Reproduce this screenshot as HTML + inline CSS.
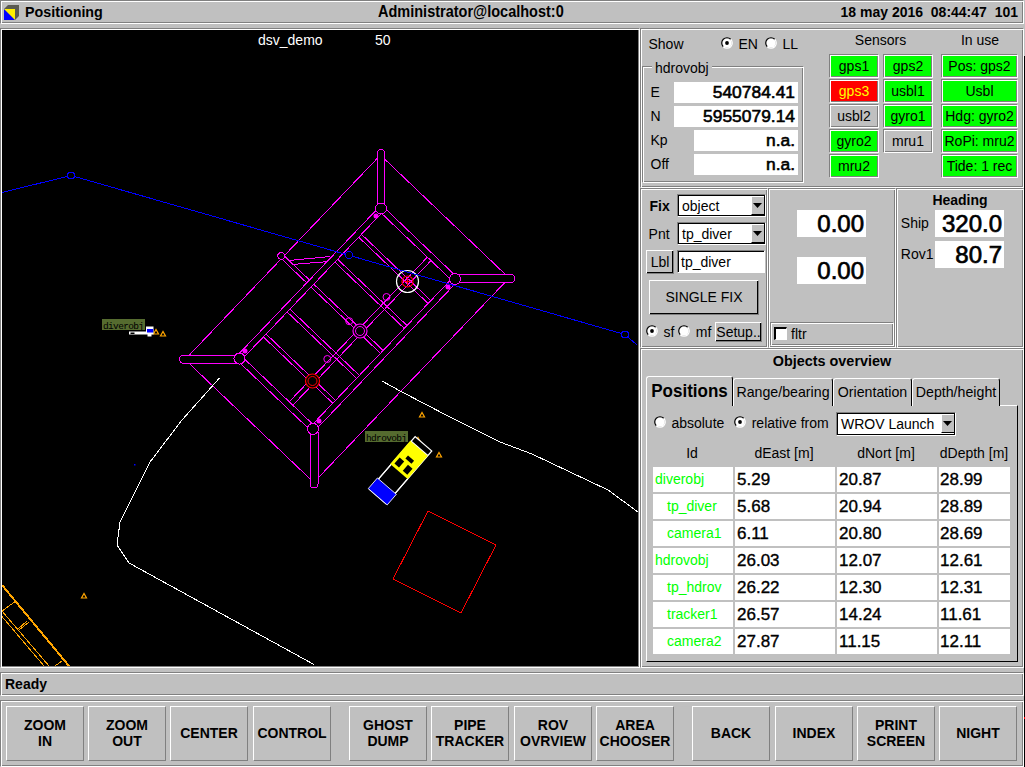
<!DOCTYPE html><html><head><meta charset="utf-8"><style>*{margin:0;padding:0}
html,body{width:1025px;height:767px;overflow:hidden;background:#c0c0c0;font-family:"Liberation Sans",sans-serif;}
.et{position:absolute;box-sizing:border-box;border:1px solid;border-color:#808080 #fff #fff #808080;box-shadow:inset 1px 1px 0 #fff,inset -1px -1px 0 #808080;}
.rz{position:absolute;box-sizing:border-box;border:1px solid;border-color:#fff #808080 #808080 #fff;background:#c0c0c0;}
.sunk{position:absolute;box-sizing:border-box;border:1px solid;border-color:#808080 #fff #fff #808080;box-shadow:inset 1px 1px 0 #000;background:#fff;}
</style></head><body>
<div class="et" style="left:0px;top:0px;width:1024px;height:24px;"></div>
<svg style="position:absolute;left:3px;top:4px" width="17" height="17" viewBox="0 0 17 17"><polygon points="1,5 5,1 16,1 16,12 12,16 12,5" fill="#5a5a50"/><polygon points="1,5 12,5 12,16 1,16" fill="#ffee00"/><polygon points="1,5 12,16 1,16" fill="#0000ff"/></svg>
<div style="position:absolute;top:4.90px;font-size:14.3px;line-height:14.3px;font-weight:bold;color:#000;white-space:pre;left:25px;transform:scaleY(1.08);transform-origin:0 12.10px;">Positioning</div>
<div style="position:absolute;top:4.73px;font-size:14.5px;line-height:14.5px;font-weight:bold;color:#000;white-space:pre;left:378px;transform:scaleY(1.08);transform-origin:0 12.27px;">Administrator@localhost:0</div>
<div style="position:absolute;top:5.15px;font-size:14px;line-height:14px;font-weight:bold;color:#000;white-space:pre;right:7px;transform:scaleY(1.08);transform-origin:0 11.85px;">18 may 2016  08:44:47  101</div>
<div class="et" style="left:0px;top:28px;width:640px;height:640px;"></div>
<svg style="position:absolute;left:2px;top:30px" width="636" height="636" viewBox="2 30 636 636"><rect x="2" y="30" width="636" height="636" fill="#000"/><g transform="translate(347.1,318.75) rotate(43.7)" fill="none" stroke="#ff00ff" stroke-width="1" shape-rendering="crispEdges">
<rect x="-89" y="-141.4" width="178" height="282.8"/>
<line x1="-55" y1="-106" x2="55" y2="-106"/>
<line x1="-55" y1="100" x2="55" y2="100"/>
<line x1="-54" y1="-107" x2="-54" y2="107"/>
<line x1="48" y1="-107" x2="48" y2="107"/>
<line x1="-55" y1="-100" x2="55" y2="-100"/>
<line x1="-55" y1="106" x2="55" y2="106"/>
<line x1="-48" y1="-107" x2="-48" y2="107"/>
<line x1="54" y1="-107" x2="54" y2="107"/>
<line x1="15.5" y1="-100" x2="15.5" y2="100"/>
<line x1="20.5" y1="-100" x2="20.5" y2="100"/>
<line x1="-48" y1="-71" x2="48" y2="-71"/>
<line x1="-48" y1="-67" x2="48" y2="-67"/>
<line x1="-48" y1="-36.5" x2="48" y2="-36.5"/>
<line x1="-48" y1="-32.5" x2="48" y2="-32.5"/>
<line x1="-48" y1="-2" x2="48" y2="-2"/>
<line x1="-48" y1="2" x2="48" y2="2"/>
<line x1="-48" y1="32.5" x2="48" y2="32.5"/>
<line x1="-48" y1="36.5" x2="48" y2="36.5"/>
<line x1="-48" y1="67" x2="48" y2="67"/>
<line x1="-48" y1="71" x2="48" y2="71"/>
<line x1="-88" y1="-2" x2="-54" y2="-2"/>
<line x1="-88" y1="2" x2="-54" y2="2"/>
<circle cx="-91" cy="0" r="3.5" fill="#000"/>
</g>
<g stroke="#ff00ff" shape-rendering="crispEdges"><line x1="290" y1="260.4" x2="330.4" y2="256.5"/><line x1="293.9" y1="264.3" x2="326.5" y2="261.7"/><line x1="364" y1="332" x2="381" y2="349"/></g>
<g fill="#000" stroke="#ff00ff" stroke-width="1" shape-rendering="crispEdges">
<rect x="377" y="149.5" width="7.5" height="60" rx="3.7"/>
<rect x="455" y="274.5" width="60" height="8" rx="4"/>
<rect x="179.5" y="355" width="60" height="8.5" rx="4.2"/>
<rect x="310" y="428" width="8" height="60" rx="4"/>
<circle cx="381" cy="208.5" r="5.5"/>
<circle cx="455" cy="279" r="5.5"/>
<circle cx="239.5" cy="358.5" r="5.5"/>
<circle cx="313" cy="428.8" r="5.5"/>
</g>
<circle cx="407.5" cy="281.5" r="11" fill="none" stroke="#fff" stroke-width="1.2"/>
<circle cx="407.5" cy="281.5" r="5.5" fill="none" stroke="#ff0000" stroke-width="1.2"/>
<path d="M404 281.5h7M407.5 278v7" stroke="#ff0000" stroke-width="1.2"/>
<circle cx="360" cy="331" r="7" fill="#000" stroke="#ff00ff" stroke-width="1.2"/>
<circle cx="360" cy="331" r="4.5" fill="none" stroke="#ff00ff" stroke-width="1"/>
<circle cx="312.5" cy="381" r="7" fill="#000" stroke="#ff0000" stroke-width="1.2"/>
<circle cx="312.5" cy="381" r="4.5" fill="none" stroke="#ff0000" stroke-width="1"/>
<circle cx="386.5" cy="297" r="3.5" fill="none" stroke="#ff00ff"/>
<circle cx="327.3" cy="359" r="3.5" fill="none" stroke="#ff00ff"/>
<circle cx="349.2" cy="321.2" r="3.5" fill="none" stroke="#ff00ff"/>
<circle cx="376" cy="216" r="2.5" fill="#ff00ff"/>
<circle cx="448" cy="287" r="2.5" fill="#ff00ff"/>
<circle cx="245" cy="351" r="2.5" fill="#ff00ff"/>
<circle cx="319" cy="421" r="2.5" fill="#ff00ff"/>
<g shape-rendering="crispEdges" fill="none" stroke-width="1">
<polyline points="2,192.5 71,175.5 625,334.5 637,345" stroke="#0000ff"/>
<circle cx="71" cy="175.5" r="3.5" stroke="#0000ff" fill="#000"/>
<circle cx="349" cy="255" r="3.5" stroke="#0000ff" fill="#000"/>
<circle cx="625" cy="334.5" r="3.5" stroke="#0000ff" fill="#000"/>
</g>
<g fill="none" stroke="#fff" stroke-width="1" shape-rendering="crispEdges">
<polyline points="219.5,378 182,420 150,462 120,522 117,545 129,563 314,664.5"/>
<polyline points="382,381 402,392 448,416 500,442 532,454 608,490 638,512"/>
</g>
<polygon points="428,511 496,545 461,613 393,579" fill="none" stroke="#ff0000" shape-rendering="crispEdges"/>
<g stroke="#ffa500" fill="none" shape-rendering="crispEdges">
<line x1="2" y1="585" x2="69" y2="666" stroke-width="2"/><line x1="2" y1="611" x2="49" y2="666"/><line x1="2" y1="616.5" x2="44" y2="666"/>
<line x1="2" y1="611" x2="14.5" y2="602"/><line x1="18" y1="629" x2="27" y2="621"/><line x1="19" y1="630" x2="29" y2="622"/><line x1="55" y1="666" x2="62.5" y2="660.5"/>
</g>
<polygon points="81.5,598 86.5,598 84,593.5" fill="none" stroke="#ffa500" stroke-width="1.2"/>
<polygon points="419.5,417 424.5,417 422,412.5" fill="none" stroke="#ffa500" stroke-width="1.2"/>
<polygon points="436.5,457 441.5,457 439,452.5" fill="none" stroke="#ffa500" stroke-width="1.2"/>
<polygon points="153.5,334 158.5,334 156,329.5" fill="none" stroke="#ffa500" stroke-width="1.2"/>
<polygon points="160.5,336 165.5,336 163,331.5" fill="none" stroke="#ffa500" stroke-width="1.2"/>
<polygon points="415.5,442 420.5,442 418,437.5" fill="none" stroke="#ffa500" stroke-width="1.2"/>
<g transform="translate(400.6,470.25) rotate(-49.2)">
<rect x="-35" y="-11" width="70" height="22" fill="#000" stroke="#fff" stroke-width="1.2"/>
<rect x="-35" y="-12.5" width="14" height="25" fill="#0000ff" stroke="#fff" stroke-width="0.8"/>
<rect x="-2" y="-12" width="31" height="23" fill="#ffff00"/>
<rect x="1" y="-9" width="8" height="6" fill="#000"/><rect x="1" y="2" width="8" height="6" fill="#000"/><rect x="12" y="-4" width="4" height="8" fill="#000"/>
<line x1="29" y1="-11" x2="29" y2="11" stroke="#fff"/><line x1="-21" y1="-11" x2="-2" y2="-11" stroke="#fff"/><line x1="-21" y1="11" x2="-2" y2="11" stroke="#fff"/>
</g>
<rect x="365" y="431" width="43" height="11" fill="#556b2f"/>
<text x="366" y="440.5" font-family="Liberation Mono" font-size="9.5" fill="#000" textLength="41">hdrovobj</text>
<rect x="102" y="319" width="43" height="11" fill="#556b2f"/>
<text x="103" y="328.5" font-family="Liberation Mono" font-size="9.5" fill="#000" textLength="41">diverobj</text>
<path d="M129,331.5h17v-5h7.5v8h-2v2h-4v-2h-18.5z" fill="#fff"/><rect x="130.5" y="332.5" width="4" height="1.5" fill="#000"/><rect x="147" y="329" width="6" height="3.5" fill="#0000ff"/><rect x="134" y="464" width="1.5" height="1.5" fill="#0000ff"/>
<text x="258" y="44.8" font-family="Liberation Sans" font-size="14" fill="#fff">dsv_demo</text>
<text x="375" y="44.8" font-family="Liberation Sans" font-size="14" fill="#fff">50</text></svg>
<div class="et" style="left:640px;top:28px;width:384px;height:160px;"></div>
<div style="position:absolute;top:37.15px;font-size:14px;line-height:14px;font-weight:normal;color:#000;white-space:pre;left:648.5px;">Show</div>
<svg style="position:absolute;left:721px;top:37px" width="12" height="12" viewBox="0 0 12 12"><circle cx="6" cy="6" r="4.6" fill="#fff"/><path d="M2.25 9.75 A5.3 5.3 0 0 1 9.75 2.25" stroke="#000" stroke-width="1.1" fill="none"/><path d="M9.75 2.25 A5.3 5.3 0 0 1 2.25 9.75" stroke="#fff" stroke-width="1.1" fill="none"/><circle cx="6" cy="6" r="1.9" fill="#000"/></svg>
<div style="position:absolute;top:37.15px;font-size:14px;line-height:14px;font-weight:normal;color:#000;white-space:pre;left:738.5px;">EN</div>
<svg style="position:absolute;left:765px;top:37px" width="12" height="12" viewBox="0 0 12 12"><circle cx="6" cy="6" r="4.6" fill="#fff"/><path d="M2.25 9.75 A5.3 5.3 0 0 1 9.75 2.25" stroke="#000" stroke-width="1.1" fill="none"/><path d="M9.75 2.25 A5.3 5.3 0 0 1 2.25 9.75" stroke="#fff" stroke-width="1.1" fill="none"/></svg>
<div style="position:absolute;top:37.15px;font-size:14px;line-height:14px;font-weight:normal;color:#000;white-space:pre;left:782.5px;">LL</div>
<div class="et" style="left:642px;top:66px;width:162px;height:117px;"></div>
<div style="position:absolute;left:652px;top:60px;width:60px;height:12px;background:#c0c0c0;"></div>
<div style="position:absolute;top:61.15px;font-size:14px;line-height:14px;font-weight:normal;color:#000;white-space:pre;left:655px;">hdrovobj</div>
<div style="position:absolute;top:85.15px;font-size:14px;line-height:14px;font-weight:normal;color:#000;white-space:pre;left:650.5px;">E</div>
<div style="position:absolute;left:674px;top:82px;width:124px;height:21px;background:#ffffff;"></div>
<div style="position:absolute;top:84.27px;font-size:17.4px;line-height:17.4px;font-weight:normal;color:#000;white-space:pre;right:230px;-webkit-text-stroke:0.6px #000">540784.41</div>
<div style="position:absolute;top:109.15px;font-size:14px;line-height:14px;font-weight:normal;color:#000;white-space:pre;left:650.5px;">N</div>
<div style="position:absolute;left:674px;top:106px;width:124px;height:21px;background:#ffffff;"></div>
<div style="position:absolute;top:108.27px;font-size:17.4px;line-height:17.4px;font-weight:normal;color:#000;white-space:pre;right:230px;-webkit-text-stroke:0.6px #000">5955079.14</div>
<div style="position:absolute;top:133.15px;font-size:14px;line-height:14px;font-weight:normal;color:#000;white-space:pre;left:650.5px;">Kp</div>
<div style="position:absolute;left:694px;top:130px;width:104px;height:21px;background:#ffffff;"></div>
<div style="position:absolute;top:132.27px;font-size:17.4px;line-height:17.4px;font-weight:normal;color:#000;white-space:pre;right:230px;-webkit-text-stroke:0.6px #000">n.a.</div>
<div style="position:absolute;top:157.15px;font-size:14px;line-height:14px;font-weight:normal;color:#000;white-space:pre;left:650.5px;">Off</div>
<div style="position:absolute;left:694px;top:154px;width:104px;height:21px;background:#ffffff;"></div>
<div style="position:absolute;top:156.27px;font-size:17.4px;line-height:17.4px;font-weight:normal;color:#000;white-space:pre;right:230px;-webkit-text-stroke:0.6px #000">n.a.</div>
<div style="position:absolute;top:33.15px;font-size:14px;line-height:14px;font-weight:normal;color:#000;white-space:pre;left:840.50px;width:80px;text-align:center;">Sensors</div>
<div style="position:absolute;top:33.15px;font-size:14px;line-height:14px;font-weight:normal;color:#000;white-space:pre;left:940.00px;width:80px;text-align:center;">In use</div>
<div class="et" style="left:829px;top:54px;width:50px;height:24px;background:#00ff00;"></div>
<div style="position:absolute;top:59.15px;font-size:14px;line-height:14px;font-weight:normal;color:#000;white-space:pre;left:829.00px;width:50px;text-align:center;">gps1</div>
<div class="et" style="left:883px;top:54px;width:50px;height:24px;background:#00ff00;"></div>
<div style="position:absolute;top:59.15px;font-size:14px;line-height:14px;font-weight:normal;color:#000;white-space:pre;left:883.00px;width:50px;text-align:center;">gps2</div>
<div class="et" style="left:941px;top:54px;width:77px;height:24px;background:#00ff00;"></div>
<div style="position:absolute;top:59.15px;font-size:14px;line-height:14px;font-weight:normal;color:#000;white-space:pre;left:941.00px;width:77px;text-align:center;">Pos: gps2</div>
<div class="et" style="left:829px;top:79px;width:50px;height:24px;background:#ff0000;"></div>
<div style="position:absolute;top:84.15px;font-size:14px;line-height:14px;font-weight:normal;color:#ffff00;white-space:pre;left:829.00px;width:50px;text-align:center;">gps3</div>
<div class="et" style="left:883px;top:79px;width:50px;height:24px;background:#00ff00;"></div>
<div style="position:absolute;top:84.15px;font-size:14px;line-height:14px;font-weight:normal;color:#000;white-space:pre;left:883.00px;width:50px;text-align:center;">usbl1</div>
<div class="et" style="left:941px;top:79px;width:77px;height:24px;background:#00ff00;"></div>
<div style="position:absolute;top:84.15px;font-size:14px;line-height:14px;font-weight:normal;color:#000;white-space:pre;left:941.00px;width:77px;text-align:center;">Usbl</div>
<div class="et" style="left:829px;top:104px;width:50px;height:24px;background:#c0c0c0;"></div>
<div style="position:absolute;top:109.15px;font-size:14px;line-height:14px;font-weight:normal;color:#000;white-space:pre;left:829.00px;width:50px;text-align:center;">usbl2</div>
<div class="et" style="left:883px;top:104px;width:50px;height:24px;background:#00ff00;"></div>
<div style="position:absolute;top:109.15px;font-size:14px;line-height:14px;font-weight:normal;color:#000;white-space:pre;left:883.00px;width:50px;text-align:center;">gyro1</div>
<div class="et" style="left:941px;top:104px;width:77px;height:24px;background:#00ff00;"></div>
<div style="position:absolute;top:109.15px;font-size:14px;line-height:14px;font-weight:normal;color:#000;white-space:pre;left:941.00px;width:77px;text-align:center;">Hdg: gyro2</div>
<div class="et" style="left:829px;top:129px;width:50px;height:24px;background:#00ff00;"></div>
<div style="position:absolute;top:134.15px;font-size:14px;line-height:14px;font-weight:normal;color:#000;white-space:pre;left:829.00px;width:50px;text-align:center;">gyro2</div>
<div class="et" style="left:883px;top:129px;width:50px;height:24px;background:#c0c0c0;"></div>
<div style="position:absolute;top:134.15px;font-size:14px;line-height:14px;font-weight:normal;color:#000;white-space:pre;left:883.00px;width:50px;text-align:center;">mru1</div>
<div class="et" style="left:941px;top:129px;width:77px;height:24px;background:#00ff00;"></div>
<div style="position:absolute;top:134.15px;font-size:14px;line-height:14px;font-weight:normal;color:#000;white-space:pre;left:941.00px;width:77px;text-align:center;">RoPi: mru2</div>
<div class="et" style="left:829px;top:154px;width:50px;height:24px;background:#00ff00;"></div>
<div style="position:absolute;top:159.15px;font-size:14px;line-height:14px;font-weight:normal;color:#000;white-space:pre;left:829.00px;width:50px;text-align:center;">mru2</div>
<div class="et" style="left:941px;top:154px;width:77px;height:24px;background:#00ff00;"></div>
<div style="position:absolute;top:159.15px;font-size:14px;line-height:14px;font-weight:normal;color:#000;white-space:pre;left:941.00px;width:77px;text-align:center;">Tide: 1 rec</div>
<div class="et" style="left:640px;top:188px;width:128px;height:160px;"></div>
<div class="et" style="left:768px;top:188px;width:128px;height:160px;"></div>
<div class="et" style="left:896px;top:188px;width:128px;height:160px;"></div>
<div style="position:absolute;top:199.15px;font-size:14px;line-height:14px;font-weight:bold;color:#000;white-space:pre;left:649.5px;transform:scaleY(1.08);transform-origin:0 11.85px;">Fix</div>
<div style="position:absolute;left:677px;top:194px;width:89px;height:23px;box-sizing:border-box;border:1px solid;border-color:#808080 #fff #fff #808080;"><div style="position:absolute;left:0;top:0;right:0;bottom:0;border:1px solid #000;background:#fff"></div></div>
<div style="position:absolute;top:199.15px;font-size:14px;line-height:14px;font-weight:normal;color:#000;white-space:pre;left:682px;">object</div>
<div style="position:absolute;left:751px;top:197px;width:13px;height:18px;box-sizing:border-box;background:#c0c0c0;border-left:1px solid #fff;border-bottom:1px solid #000;"></div>
<svg style="position:absolute;left:753px;top:203px" width="10" height="6"><polygon points="0,0 9,0 4.5,5" fill="#000"/></svg>
<div style="position:absolute;top:227.15px;font-size:14px;line-height:14px;font-weight:normal;color:#000;white-space:pre;left:648.6px;">Pnt</div>
<div style="position:absolute;left:677px;top:222px;width:89px;height:23px;box-sizing:border-box;border:1px solid;border-color:#808080 #fff #fff #808080;"><div style="position:absolute;left:0;top:0;right:0;bottom:0;border:1px solid #000;background:#fff"></div></div>
<div style="position:absolute;top:227.15px;font-size:14px;line-height:14px;font-weight:normal;color:#000;white-space:pre;left:682px;">tp_diver</div>
<div style="position:absolute;left:751px;top:225px;width:13px;height:18px;box-sizing:border-box;background:#c0c0c0;border-left:1px solid #fff;border-bottom:1px solid #000;"></div>
<svg style="position:absolute;left:753px;top:231px" width="10" height="6"><polygon points="0,0 9,0 4.5,5" fill="#000"/></svg>
<div class="rz" style="left:646px;top:250px;width:28px;height:24px;box-shadow:inset -1px -1px 0 #000;"></div>
<div style="position:absolute;top:255.15px;font-size:14px;line-height:14px;font-weight:normal;color:#000;white-space:pre;left:646.00px;width:28px;text-align:center;">Lbl</div>
<div class="sunk" style="left:677px;top:250px;width:88px;height:23px;"></div>
<div style="position:absolute;top:255.15px;font-size:14px;line-height:14px;font-weight:normal;color:#000;white-space:pre;left:681px;">tp_diver</div>
<div class="rz" style="left:649px;top:280px;width:110px;height:35px;box-shadow:inset -1px -1px 0 #000;"></div>
<div style="position:absolute;top:290.15px;font-size:14px;line-height:14px;font-weight:normal;color:#000;white-space:pre;left:649.00px;width:110px;text-align:center;">SINGLE FIX</div>
<svg style="position:absolute;left:646px;top:325px" width="12" height="12" viewBox="0 0 12 12"><circle cx="6" cy="6" r="4.6" fill="#fff"/><path d="M2.25 9.75 A5.3 5.3 0 0 1 9.75 2.25" stroke="#000" stroke-width="1.1" fill="none"/><path d="M9.75 2.25 A5.3 5.3 0 0 1 2.25 9.75" stroke="#fff" stroke-width="1.1" fill="none"/><circle cx="6" cy="6" r="1.9" fill="#000"/></svg>
<div style="position:absolute;top:325.15px;font-size:14px;line-height:14px;font-weight:normal;color:#000;white-space:pre;left:663.5px;">sf</div>
<svg style="position:absolute;left:678px;top:325px" width="12" height="12" viewBox="0 0 12 12"><circle cx="6" cy="6" r="4.6" fill="#fff"/><path d="M2.25 9.75 A5.3 5.3 0 0 1 9.75 2.25" stroke="#000" stroke-width="1.1" fill="none"/><path d="M9.75 2.25 A5.3 5.3 0 0 1 2.25 9.75" stroke="#fff" stroke-width="1.1" fill="none"/></svg>
<div style="position:absolute;top:325.15px;font-size:14px;line-height:14px;font-weight:normal;color:#000;white-space:pre;left:695.8px;">mf</div>
<div class="rz" style="left:715px;top:322px;width:47px;height:20px;box-shadow:inset -1px -1px 0 #000;"></div>
<div style="position:absolute;top:325.15px;font-size:14px;line-height:14px;font-weight:normal;color:#000;white-space:pre;left:715.00px;width:47px;text-align:center;">Setup..</div>
<div style="position:absolute;left:797px;top:210px;width:69px;height:27px;background:#ffffff;"></div>
<div style="position:absolute;top:211.68px;font-size:24px;line-height:24px;font-weight:normal;color:#000;white-space:pre;right:161px;-webkit-text-stroke:0.7px #000">0.00</div>
<div style="position:absolute;left:797px;top:257px;width:69px;height:27px;background:#ffffff;"></div>
<div style="position:absolute;top:258.68px;font-size:24px;line-height:24px;font-weight:normal;color:#000;white-space:pre;right:161px;-webkit-text-stroke:0.7px #000">0.00</div>
<div class="et" style="left:770px;top:322px;width:124px;height:24px;"></div>
<div style="position:absolute;left:774px;top:327px;width:13px;height:13px;box-sizing:border-box;border-style:solid;border-width:2px 1px 1px 2px;border-color:#000 #fff #fff #000;background:#fff"></div>
<div style="position:absolute;top:327.15px;font-size:14px;line-height:14px;font-weight:normal;color:#000;white-space:pre;left:791px;">fltr</div>
<div style="position:absolute;top:193.15px;font-size:14px;line-height:14px;font-weight:bold;color:#000;white-space:pre;left:910.00px;width:100px;text-align:center;transform:scaleY(1.08);transform-origin:0 11.85px;">Heading</div>
<div style="position:absolute;top:216.15px;font-size:14px;line-height:14px;font-weight:normal;color:#000;white-space:pre;left:900.8px;">Ship</div>
<div style="position:absolute;left:935px;top:210px;width:69px;height:27px;background:#ffffff;"></div>
<div style="position:absolute;top:211.68px;font-size:24px;line-height:24px;font-weight:normal;color:#000;white-space:pre;right:23px;-webkit-text-stroke:0.7px #000">320.0</div>
<div style="position:absolute;top:247.15px;font-size:14px;line-height:14px;font-weight:normal;color:#000;white-space:pre;left:900.8px;">Rov1</div>
<div style="position:absolute;left:935px;top:241px;width:69px;height:27px;background:#ffffff;"></div>
<div style="position:absolute;top:242.68px;font-size:24px;line-height:24px;font-weight:normal;color:#000;white-space:pre;right:23px;-webkit-text-stroke:0.7px #000">80.7</div>
<div class="et" style="left:640px;top:348px;width:384px;height:320px;"></div>
<div style="position:absolute;top:353.81px;font-size:14.4px;line-height:14.4px;font-weight:bold;color:#000;white-space:pre;left:732.00px;width:200px;text-align:center;transform:scaleY(1.08);transform-origin:0 12.19px;">Objects overview</div>
<div style="position:absolute;left:646px;top:405px;width:372px;height:257px;box-sizing:border-box;border:1px solid;border-color:#fff #000 #000 #fff;"></div>
<div style="position:absolute;left:733px;top:378px;width:100px;height:28px;box-sizing:border-box;border:1px solid;border-color:#fff #000 transparent #fff;border-bottom:none;background:#c0c0c0;border-radius:3px 3px 0 0"></div>
<div style="position:absolute;top:384.98px;font-size:14.2px;line-height:14.2px;font-weight:normal;color:#000;white-space:pre;left:733.00px;width:100px;text-align:center;">Range/bearing</div>
<div style="position:absolute;left:833px;top:378px;width:79px;height:28px;box-sizing:border-box;border:1px solid;border-color:#fff #000 transparent #fff;border-bottom:none;background:#c0c0c0;border-radius:3px 3px 0 0"></div>
<div style="position:absolute;top:384.98px;font-size:14.2px;line-height:14.2px;font-weight:normal;color:#000;white-space:pre;left:833.00px;width:79px;text-align:center;">Orientation</div>
<div style="position:absolute;left:912px;top:378px;width:88px;height:28px;box-sizing:border-box;border:1px solid;border-color:#fff #000 transparent #fff;border-bottom:none;background:#c0c0c0;border-radius:3px 3px 0 0"></div>
<div style="position:absolute;top:384.98px;font-size:14.2px;line-height:14.2px;font-weight:normal;color:#000;white-space:pre;left:912.00px;width:88px;text-align:center;">Depth/height</div>
<div style="position:absolute;left:646px;top:376px;width:87px;height:30px;box-sizing:border-box;border:1px solid;border-color:#fff #000 transparent #fff;border-bottom:none;background:#c0c0c0;border-radius:3px 3px 0 0"></div>
<div style="position:absolute;top:382.61px;font-size:17px;line-height:17px;font-weight:bold;color:#000;white-space:pre;left:646.00px;width:87px;text-align:center;transform:scaleY(1.08);transform-origin:0 14.39px;">Positions</div>
<div style="position:absolute;left:647px;top:405px;width:85px;height:1px;background:#c0c0c0;"></div>
<svg style="position:absolute;left:654px;top:416px" width="12" height="12" viewBox="0 0 12 12"><circle cx="6" cy="6" r="4.6" fill="#fff"/><path d="M2.25 9.75 A5.3 5.3 0 0 1 9.75 2.25" stroke="#000" stroke-width="1.1" fill="none"/><path d="M9.75 2.25 A5.3 5.3 0 0 1 2.25 9.75" stroke="#fff" stroke-width="1.1" fill="none"/></svg>
<div style="position:absolute;top:416.15px;font-size:14px;line-height:14px;font-weight:normal;color:#000;white-space:pre;left:671.4px;">absolute</div>
<svg style="position:absolute;left:734px;top:416px" width="12" height="12" viewBox="0 0 12 12"><circle cx="6" cy="6" r="4.6" fill="#fff"/><path d="M2.25 9.75 A5.3 5.3 0 0 1 9.75 2.25" stroke="#000" stroke-width="1.1" fill="none"/><path d="M9.75 2.25 A5.3 5.3 0 0 1 2.25 9.75" stroke="#fff" stroke-width="1.1" fill="none"/><circle cx="6" cy="6" r="1.9" fill="#000"/></svg>
<div style="position:absolute;top:416.15px;font-size:14px;line-height:14px;font-weight:normal;color:#000;white-space:pre;left:751.7px;">relative from</div>
<div style="position:absolute;left:836px;top:412px;width:120px;height:24px;box-sizing:border-box;border:1px solid;border-color:#808080 #fff #fff #808080;"><div style="position:absolute;left:0;top:0;right:0;bottom:0;border:1px solid #000;background:#fff"></div></div>
<div style="position:absolute;top:417.15px;font-size:14px;line-height:14px;font-weight:normal;color:#000;white-space:pre;left:841px;">WROV Launch</div>
<div style="position:absolute;left:941px;top:415px;width:13px;height:18px;box-sizing:border-box;background:#c0c0c0;border-left:1px solid #fff;border-bottom:1px solid #000;"></div>
<svg style="position:absolute;left:943px;top:421px" width="10" height="6"><polygon points="0,0 9,0 4.5,5" fill="#000"/></svg>
<div style="position:absolute;top:446.15px;font-size:14px;line-height:14px;font-weight:normal;color:#000;white-space:pre;left:632.00px;width:120px;text-align:center;">Id</div>
<div style="position:absolute;top:446.15px;font-size:14px;line-height:14px;font-weight:normal;color:#000;white-space:pre;left:724.00px;width:120px;text-align:center;">dEast [m]</div>
<div style="position:absolute;top:446.15px;font-size:14px;line-height:14px;font-weight:normal;color:#000;white-space:pre;left:826.00px;width:120px;text-align:center;">dNort [m]</div>
<div style="position:absolute;top:446.15px;font-size:14px;line-height:14px;font-weight:normal;color:#000;white-space:pre;left:914.00px;width:120px;text-align:center;">dDepth [m]</div>
<div style="position:absolute;left:653px;top:467px;width:80px;height:25px;background:#ffffff;"></div>
<div style="position:absolute;left:735px;top:467px;width:100px;height:25px;background:#ffffff;"></div>
<div style="position:absolute;left:837px;top:467px;width:100px;height:25px;background:#ffffff;"></div>
<div style="position:absolute;left:939px;top:467px;width:71px;height:25px;background:#ffffff;"></div>
<div style="position:absolute;top:472.15px;font-size:14px;line-height:14px;font-weight:normal;color:#00ff00;white-space:pre;left:655px;">diverobj</div>
<div style="position:absolute;top:470.61px;font-size:17px;line-height:17px;font-weight:normal;color:#000;white-space:pre;left:737px;-webkit-text-stroke:0.35px #000">5.29</div>
<div style="position:absolute;top:470.61px;font-size:17px;line-height:17px;font-weight:normal;color:#000;white-space:pre;left:839px;-webkit-text-stroke:0.35px #000">20.87</div>
<div style="position:absolute;top:470.61px;font-size:17px;line-height:17px;font-weight:normal;color:#000;white-space:pre;left:940px;-webkit-text-stroke:0.35px #000">28.99</div>
<div style="position:absolute;left:653px;top:494px;width:80px;height:25px;background:#ffffff;"></div>
<div style="position:absolute;left:735px;top:494px;width:100px;height:25px;background:#ffffff;"></div>
<div style="position:absolute;left:837px;top:494px;width:100px;height:25px;background:#ffffff;"></div>
<div style="position:absolute;left:939px;top:494px;width:71px;height:25px;background:#ffffff;"></div>
<div style="position:absolute;top:499.15px;font-size:14px;line-height:14px;font-weight:normal;color:#00ff00;white-space:pre;left:667px;">tp_diver</div>
<div style="position:absolute;top:497.61px;font-size:17px;line-height:17px;font-weight:normal;color:#000;white-space:pre;left:737px;-webkit-text-stroke:0.35px #000">5.68</div>
<div style="position:absolute;top:497.61px;font-size:17px;line-height:17px;font-weight:normal;color:#000;white-space:pre;left:839px;-webkit-text-stroke:0.35px #000">20.94</div>
<div style="position:absolute;top:497.61px;font-size:17px;line-height:17px;font-weight:normal;color:#000;white-space:pre;left:940px;-webkit-text-stroke:0.35px #000">28.89</div>
<div style="position:absolute;left:653px;top:521px;width:80px;height:25px;background:#ffffff;"></div>
<div style="position:absolute;left:735px;top:521px;width:100px;height:25px;background:#ffffff;"></div>
<div style="position:absolute;left:837px;top:521px;width:100px;height:25px;background:#ffffff;"></div>
<div style="position:absolute;left:939px;top:521px;width:71px;height:25px;background:#ffffff;"></div>
<div style="position:absolute;top:526.15px;font-size:14px;line-height:14px;font-weight:normal;color:#00ff00;white-space:pre;left:667px;">camera1</div>
<div style="position:absolute;top:524.61px;font-size:17px;line-height:17px;font-weight:normal;color:#000;white-space:pre;left:737px;-webkit-text-stroke:0.35px #000">6.11</div>
<div style="position:absolute;top:524.61px;font-size:17px;line-height:17px;font-weight:normal;color:#000;white-space:pre;left:839px;-webkit-text-stroke:0.35px #000">20.80</div>
<div style="position:absolute;top:524.61px;font-size:17px;line-height:17px;font-weight:normal;color:#000;white-space:pre;left:940px;-webkit-text-stroke:0.35px #000">28.69</div>
<div style="position:absolute;left:653px;top:548px;width:80px;height:25px;background:#ffffff;"></div>
<div style="position:absolute;left:735px;top:548px;width:100px;height:25px;background:#ffffff;"></div>
<div style="position:absolute;left:837px;top:548px;width:100px;height:25px;background:#ffffff;"></div>
<div style="position:absolute;left:939px;top:548px;width:71px;height:25px;background:#ffffff;"></div>
<div style="position:absolute;top:553.15px;font-size:14px;line-height:14px;font-weight:normal;color:#00ff00;white-space:pre;left:655px;">hdrovobj</div>
<div style="position:absolute;top:551.61px;font-size:17px;line-height:17px;font-weight:normal;color:#000;white-space:pre;left:737px;-webkit-text-stroke:0.35px #000">26.03</div>
<div style="position:absolute;top:551.61px;font-size:17px;line-height:17px;font-weight:normal;color:#000;white-space:pre;left:839px;-webkit-text-stroke:0.35px #000">12.07</div>
<div style="position:absolute;top:551.61px;font-size:17px;line-height:17px;font-weight:normal;color:#000;white-space:pre;left:940px;-webkit-text-stroke:0.35px #000">12.61</div>
<div style="position:absolute;left:653px;top:575px;width:80px;height:25px;background:#ffffff;"></div>
<div style="position:absolute;left:735px;top:575px;width:100px;height:25px;background:#ffffff;"></div>
<div style="position:absolute;left:837px;top:575px;width:100px;height:25px;background:#ffffff;"></div>
<div style="position:absolute;left:939px;top:575px;width:71px;height:25px;background:#ffffff;"></div>
<div style="position:absolute;top:580.15px;font-size:14px;line-height:14px;font-weight:normal;color:#00ff00;white-space:pre;left:667px;">tp_hdrov</div>
<div style="position:absolute;top:578.61px;font-size:17px;line-height:17px;font-weight:normal;color:#000;white-space:pre;left:737px;-webkit-text-stroke:0.35px #000">26.22</div>
<div style="position:absolute;top:578.61px;font-size:17px;line-height:17px;font-weight:normal;color:#000;white-space:pre;left:839px;-webkit-text-stroke:0.35px #000">12.30</div>
<div style="position:absolute;top:578.61px;font-size:17px;line-height:17px;font-weight:normal;color:#000;white-space:pre;left:940px;-webkit-text-stroke:0.35px #000">12.31</div>
<div style="position:absolute;left:653px;top:602px;width:80px;height:25px;background:#ffffff;"></div>
<div style="position:absolute;left:735px;top:602px;width:100px;height:25px;background:#ffffff;"></div>
<div style="position:absolute;left:837px;top:602px;width:100px;height:25px;background:#ffffff;"></div>
<div style="position:absolute;left:939px;top:602px;width:71px;height:25px;background:#ffffff;"></div>
<div style="position:absolute;top:607.15px;font-size:14px;line-height:14px;font-weight:normal;color:#00ff00;white-space:pre;left:667px;">tracker1</div>
<div style="position:absolute;top:605.61px;font-size:17px;line-height:17px;font-weight:normal;color:#000;white-space:pre;left:737px;-webkit-text-stroke:0.35px #000">26.57</div>
<div style="position:absolute;top:605.61px;font-size:17px;line-height:17px;font-weight:normal;color:#000;white-space:pre;left:839px;-webkit-text-stroke:0.35px #000">14.24</div>
<div style="position:absolute;top:605.61px;font-size:17px;line-height:17px;font-weight:normal;color:#000;white-space:pre;left:940px;-webkit-text-stroke:0.35px #000">11.61</div>
<div style="position:absolute;left:653px;top:629px;width:80px;height:25px;background:#ffffff;"></div>
<div style="position:absolute;left:735px;top:629px;width:100px;height:25px;background:#ffffff;"></div>
<div style="position:absolute;left:837px;top:629px;width:100px;height:25px;background:#ffffff;"></div>
<div style="position:absolute;left:939px;top:629px;width:71px;height:25px;background:#ffffff;"></div>
<div style="position:absolute;top:634.15px;font-size:14px;line-height:14px;font-weight:normal;color:#00ff00;white-space:pre;left:667px;">camera2</div>
<div style="position:absolute;top:632.61px;font-size:17px;line-height:17px;font-weight:normal;color:#000;white-space:pre;left:737px;-webkit-text-stroke:0.35px #000">27.87</div>
<div style="position:absolute;top:632.61px;font-size:17px;line-height:17px;font-weight:normal;color:#000;white-space:pre;left:839px;-webkit-text-stroke:0.35px #000">11.15</div>
<div style="position:absolute;top:632.61px;font-size:17px;line-height:17px;font-weight:normal;color:#000;white-space:pre;left:940px;-webkit-text-stroke:0.35px #000">12.11</div>
<div class="et" style="left:0px;top:672px;width:1024px;height:24px;"></div>
<div style="position:absolute;top:677.15px;font-size:14px;line-height:14px;font-weight:bold;color:#000;white-space:pre;left:5px;transform:scaleY(1.08);transform-origin:0 11.85px;">Ready</div>
<div class="et" style="left:0px;top:700px;width:1024px;height:67px;"></div>
<div class="rz" style="left:6px;top:706px;width:78px;height:55px;"></div>
<div style="position:absolute;top:718.15px;font-size:14px;line-height:14px;font-weight:bold;color:#000;white-space:pre;left:6.00px;width:78px;text-align:center;transform:scaleY(1.08);transform-origin:0 11.85px;">ZOOM</div>
<div style="position:absolute;top:734.15px;font-size:14px;line-height:14px;font-weight:bold;color:#000;white-space:pre;left:6.00px;width:78px;text-align:center;transform:scaleY(1.08);transform-origin:0 11.85px;">IN</div>
<div class="rz" style="left:88px;top:706px;width:78px;height:55px;"></div>
<div style="position:absolute;top:718.15px;font-size:14px;line-height:14px;font-weight:bold;color:#000;white-space:pre;left:88.00px;width:78px;text-align:center;transform:scaleY(1.08);transform-origin:0 11.85px;">ZOOM</div>
<div style="position:absolute;top:734.15px;font-size:14px;line-height:14px;font-weight:bold;color:#000;white-space:pre;left:88.00px;width:78px;text-align:center;transform:scaleY(1.08);transform-origin:0 11.85px;">OUT</div>
<div class="rz" style="left:170px;top:706px;width:78px;height:55px;"></div>
<div style="position:absolute;top:726.15px;font-size:14px;line-height:14px;font-weight:bold;color:#000;white-space:pre;left:170.00px;width:78px;text-align:center;transform:scaleY(1.08);transform-origin:0 11.85px;">CENTER</div>
<div class="rz" style="left:253px;top:706px;width:78px;height:55px;"></div>
<div style="position:absolute;top:726.15px;font-size:14px;line-height:14px;font-weight:bold;color:#000;white-space:pre;left:253.00px;width:78px;text-align:center;transform:scaleY(1.08);transform-origin:0 11.85px;">CONTROL</div>
<div class="rz" style="left:349px;top:706px;width:78px;height:55px;"></div>
<div style="position:absolute;top:718.15px;font-size:14px;line-height:14px;font-weight:bold;color:#000;white-space:pre;left:349.00px;width:78px;text-align:center;transform:scaleY(1.08);transform-origin:0 11.85px;">GHOST</div>
<div style="position:absolute;top:734.15px;font-size:14px;line-height:14px;font-weight:bold;color:#000;white-space:pre;left:349.00px;width:78px;text-align:center;transform:scaleY(1.08);transform-origin:0 11.85px;">DUMP</div>
<div class="rz" style="left:431px;top:706px;width:78px;height:55px;"></div>
<div style="position:absolute;top:718.15px;font-size:14px;line-height:14px;font-weight:bold;color:#000;white-space:pre;left:431.00px;width:78px;text-align:center;transform:scaleY(1.08);transform-origin:0 11.85px;">PIPE</div>
<div style="position:absolute;top:734.15px;font-size:14px;line-height:14px;font-weight:bold;color:#000;white-space:pre;left:431.00px;width:78px;text-align:center;transform:scaleY(1.08);transform-origin:0 11.85px;">TRACKER</div>
<div class="rz" style="left:514px;top:706px;width:78px;height:55px;"></div>
<div style="position:absolute;top:718.15px;font-size:14px;line-height:14px;font-weight:bold;color:#000;white-space:pre;left:514.00px;width:78px;text-align:center;transform:scaleY(1.08);transform-origin:0 11.85px;">ROV</div>
<div style="position:absolute;top:734.15px;font-size:14px;line-height:14px;font-weight:bold;color:#000;white-space:pre;left:514.00px;width:78px;text-align:center;transform:scaleY(1.08);transform-origin:0 11.85px;">OVRVIEW</div>
<div class="rz" style="left:596px;top:706px;width:78px;height:55px;"></div>
<div style="position:absolute;top:718.15px;font-size:14px;line-height:14px;font-weight:bold;color:#000;white-space:pre;left:596.00px;width:78px;text-align:center;transform:scaleY(1.08);transform-origin:0 11.85px;">AREA</div>
<div style="position:absolute;top:734.15px;font-size:14px;line-height:14px;font-weight:bold;color:#000;white-space:pre;left:596.00px;width:78px;text-align:center;transform:scaleY(1.08);transform-origin:0 11.85px;">CHOOSER</div>
<div class="rz" style="left:692px;top:706px;width:78px;height:55px;"></div>
<div style="position:absolute;top:726.15px;font-size:14px;line-height:14px;font-weight:bold;color:#000;white-space:pre;left:692.00px;width:78px;text-align:center;transform:scaleY(1.08);transform-origin:0 11.85px;">BACK</div>
<div class="rz" style="left:775px;top:706px;width:78px;height:55px;"></div>
<div style="position:absolute;top:726.15px;font-size:14px;line-height:14px;font-weight:bold;color:#000;white-space:pre;left:775.00px;width:78px;text-align:center;transform:scaleY(1.08);transform-origin:0 11.85px;">INDEX</div>
<div class="rz" style="left:857px;top:706px;width:78px;height:55px;"></div>
<div style="position:absolute;top:718.15px;font-size:14px;line-height:14px;font-weight:bold;color:#000;white-space:pre;left:857.00px;width:78px;text-align:center;transform:scaleY(1.08);transform-origin:0 11.85px;">PRINT</div>
<div style="position:absolute;top:734.15px;font-size:14px;line-height:14px;font-weight:bold;color:#000;white-space:pre;left:857.00px;width:78px;text-align:center;transform:scaleY(1.08);transform-origin:0 11.85px;">SCREEN</div>
<div class="rz" style="left:939px;top:706px;width:78px;height:55px;"></div>
<div style="position:absolute;top:726.15px;font-size:14px;line-height:14px;font-weight:bold;color:#000;white-space:pre;left:939.00px;width:78px;text-align:center;transform:scaleY(1.08);transform-origin:0 11.85px;">NIGHT</div>
<div style="position:absolute;left:1024px;top:56px;width:1px;height:711px;background:#000;"></div>
<div style="position:absolute;left:1024px;top:717px;width:1px;height:2px;background:#ff0000;"></div>
</body></html>
